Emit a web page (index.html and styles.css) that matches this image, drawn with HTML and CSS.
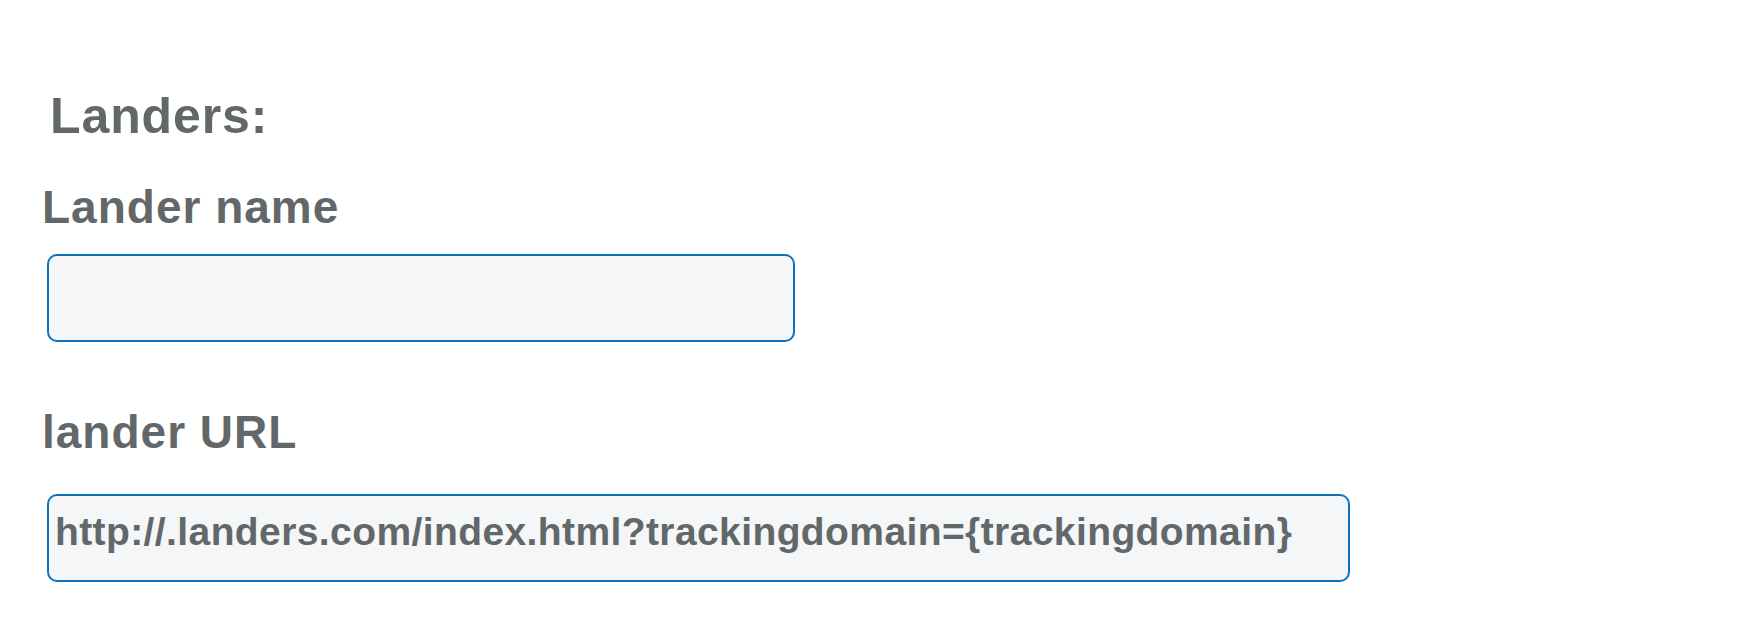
FILE: index.html
```html
<!DOCTYPE html>
<html lang="en">
<head>
<meta charset="utf-8">
<title>Landers</title>
<link rel="stylesheet" href="styles.css">
</head>
<body>
<form class="form">
  <h2 class="form-title">Landers:</h2>
  <label class="field-label" for="lander-name">Lander name</label>
  <input class="field-input field-input--name" id="lander-name" type="text" value="">
  <label class="field-label field-label--url" for="lander-url">lander URL</label>
  <input class="field-input field-input--url" id="lander-url" type="text" value="http://.landers.com/index.html?trackingdomain={trackingdomain}">
</form>
</body>
</html>
```

FILE: styles.css
```css
html, body {
  margin: 0;
  padding: 0;
  background: #ffffff;
}

body {
  font-family: "Liberation Sans", Arial, Helvetica, sans-serif;
  color: #62686a;
}

.form {
  display: flex;
  flex-direction: column;
  align-items: flex-start;
  padding: 91px 0 0 42px;
}

.form-title {
  margin: 0 0 43px 8px;
  font-size: 50px;
  line-height: 1;
  font-weight: 700;
  letter-spacing: 0.9px;
}

.field-label {
  display: block;
  font-size: 46px;
  line-height: 1;
  font-weight: 700;
  letter-spacing: 1px;
  margin: 0 0 24px 0;
}

.field-label--url {
  margin-top: 67px;
  margin-bottom: 39px;
}

.field-input {
  box-sizing: border-box;
  margin: 0 0 0 5px;
  height: 88px;
  padding: 0 10px 12px 6px;
  border: 2px solid #0b72bd;
  border-radius: 10px;
  background: #f4f6f8;
  font-family: "Liberation Sans", Arial, Helvetica, sans-serif;
  font-size: 39px;
  font-weight: 700;
  color: #62686a;
  letter-spacing: 0.4px;
  outline: none;
}

.field-input--name {
  width: 748px;
}

.field-input--url {
  width: 1303px;
}
```
